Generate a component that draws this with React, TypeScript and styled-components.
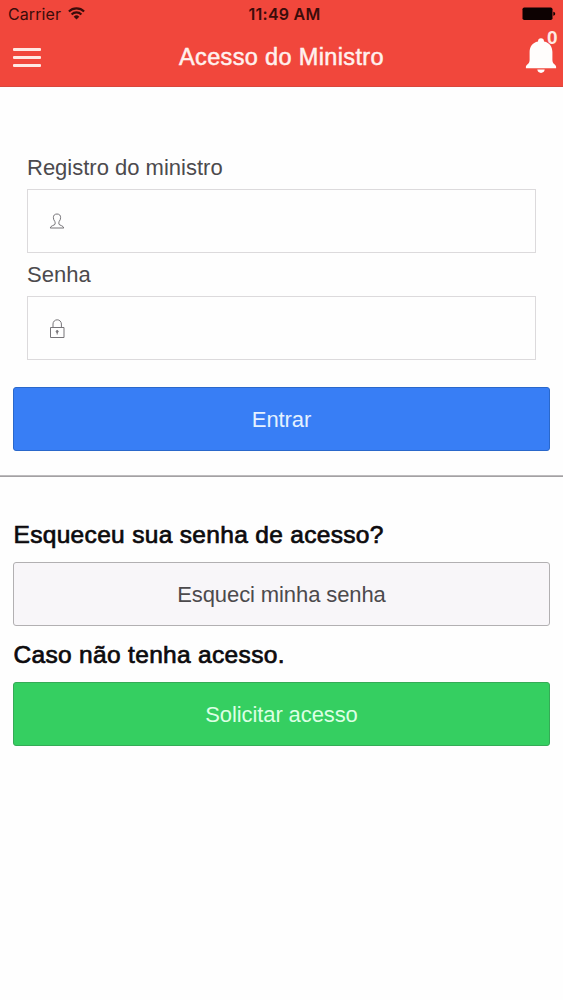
import React from "react";
import styled, { createGlobalStyle } from "styled-components";

const GlobalStyle = createGlobalStyle`
  *, *::before, *::after { box-sizing: border-box; }
  body { margin: 0; background: #fefefe; font-family: "Liberation Sans", Arial, sans-serif; }
`;

const Screen = styled.div`
  width: 100%;
  min-height: 1000px;
  background: #fefefe;
`;

const Header = styled.header`
  height: 87px;
  background: #f1473c;
  border-bottom: 1px solid #d8473d;
`;

const StatusBar = styled.div`
  display: grid;
  grid-template-columns: 1fr auto 1fr;
  align-items: center;
  height: 28px;
  padding: 0 7px 0 8px;
  font-family: Inter, sans-serif;
  font-size: 16px;
  line-height: 29px;
  color: #3a0c0a;
`;

const Carrier = styled.div`
  display: flex;
  align-items: center;
  gap: 7px;
  letter-spacing: 0.1px;

  svg {
    position: relative;
    top: -1px;
  }
`;

const Clock = styled.div`
  font-weight: 600;
  font-size: 16px;
  letter-spacing: 0.25px;
  padding-left: 5px;
`;

const BatterySlot = styled.div`
  display: flex;
  justify-content: flex-end;

  svg {
    margin-bottom: 1px;
  }
`;

const NavBar = styled.div`
  display: grid;
  grid-template-columns: 60px 1fr 60px;
  height: 58px;
`;

const MenuButton = styled.button`
  display: flex;
  flex-direction: column;
  gap: 5.3px;
  padding: 19.5px 0 0 13px;
  border: 0;
  background: none;
`;

const MenuLine = styled.span`
  width: 28px;
  height: 3px;
  border-radius: 1px;
  background: #ffe9e4;
`;

const Title = styled.h1`
  margin: 0;
  text-align: center;
  font-size: 23.5px;
  font-weight: 400;
  line-height: 59px;
  letter-spacing: 0.35px;
  color: #fff1ee;
  -webkit-text-stroke: 0.5px #fff1ee;
`;

const BellButton = styled.div`
  position: relative;
  display: flex;
  padding: 10px 0 0 22px;
`;

const Count = styled.span`
  position: absolute;
  left: 44px;
  top: 0;
  font-size: 19px;
  font-weight: 700;
  line-height: 20px;
  color: #ffe9e4;
`;

const Form = styled.form`
  padding: 65px 27px 0;
`;

const Label = styled.label`
  display: block;
  height: 37px;
  font-size: 22px;
  line-height: 32px;
  letter-spacing: 0;
  color: #4c4a4d;
`;

const Field = styled.div<{ $gap: number }>`
  display: flex;
  align-items: center;
  height: 64px;
  margin-bottom: ${(p) => p.$gap}px;
  padding-left: 20px;
  border: 1px solid #dcdadc;
  background: #fefefe;
`;

const Actions = styled.section`
  padding: 0 13px;
`;

const Button = styled.button<{ $bg: string; $edge: string; $ink: string }>`
  display: block;
  width: 100%;
  height: 64px;
  padding: 2px 0 0;
  border: 1px solid ${(p) => p.$edge};
  border-radius: 3px;
  background: ${(p) => p.$bg};
  color: ${(p) => p.$ink};
  font-family: inherit;
  font-size: 22px;
  line-height: 60px;
  letter-spacing: -0.1px;
`;

const Rule = styled.hr`
  height: 2px;
  margin: 24px 0 41px;
  border: 0;
  border-top: 1px solid #bdbbbd;
  background: #a3a1a3;
`;

const Heading = styled.h2<{ $top: number }>`
  margin: ${(p) => p.$top}px 0 0;
  height: 44px;
  padding-left: 0.5px;
  font-size: 24.5px;
  font-weight: 400;
  line-height: 34px;
  letter-spacing: 0.32px;
  color: #0c0a0d;
  -webkit-text-stroke: 0.7px #0c0a0d;
`;

const WifiIcon = () => (
  <svg width="17" height="13" viewBox="0 0 17 13" fill="none" stroke="#3a0c0a" strokeWidth="2.1">
    <path d="M0.9 4.5a10.8 10.8 0 0 1 15.2 0" />
    <path d="M3.6 7.4a7 7 0 0 1 9.8 0" />
    <path d="M8.5 12.6L5.7 9.7a4 4 0 0 1 5.6 0z" fill="#3a0c0a" stroke="none" />
  </svg>
);

const BatteryIcon = () => (
  <svg width="34" height="14" viewBox="0 0 34 14" fill="#0d0202">
    <rect x="0.5" y="0.5" width="30" height="12.5" rx="1.8" />
    <path d="M31.3 4.7c1.2.3 1.9 1 1.9 2s-.7 1.8-1.9 2z" />
  </svg>
);

const BellIcon = () => (
  <svg width="32" height="36" viewBox="0 0 32 36" fill="#fffdfc">
    <path d="M16 0.3c-1.8 0-3 1.2-3 3.100C7.200 4.700 4.600 8.800 4.600 14v8c0 2-.7 3.200-2 4.300C1.300 27.400.9 28 .9 29v1.300h30.200V29c0-1-.4-1.600-1.700-2.700-1.300-1.100-2-2.300-2-4.300v-8c0-5.200-2.600-9.300-8.400-10.600 0-1.900-1.200-3.100-3-3.100z" />
    <path d="M12.300 31.600h7.400c-.3 2.200-1.700 3.300-3.700 3.300s-3.400-1.100-3.700-3.300z" />
  </svg>
);

const PersonIcon = () => (
  <svg width="18" height="18" viewBox="0 0 18 18" fill="none" stroke="#777579" strokeWidth="1">
    <path d="M9 2C6.500 2 5.300 3.500 5.400 5.700c.1 1.700.5 2.600 1.400 3.700.5.700.5 2.300.2 2.900-.6 1-4.400 1.300-4.800 3.700h13.600c-.4-2.400-4.200-2.700-4.800-3.700-.3-.6-.3-2.200.2-2.900.9-1.100 1.300-2 1.400-3.700C12.700 3.500 11.500 2 9 2z" />
  </svg>
);

const LockIcon = () => (
  <svg width="18" height="22" viewBox="0 0 18 22" fill="none" stroke="#777579" strokeWidth="1">
    <path d="M2.500 10.500h13.500v10H2.500z" />
    <path d="M5 10.500V7a4.200 4.200 0 0 1 8.400 0v3.500" />
    <circle cx="9.200" cy="14.500" r="1" fill="#777579" />
    <path d="M9.200 15v2.500" />
  </svg>
);

export default function App() {
  return (
    <Screen>
      <GlobalStyle />
      <Header>
        <StatusBar>
          <Carrier>
            Carrier
            <WifiIcon />
          </Carrier>
          <Clock>11:49 AM</Clock>
          <BatterySlot>
            <BatteryIcon />
          </BatterySlot>
        </StatusBar>
        <NavBar>
          <MenuButton type="button" aria-label="Menu">
            <MenuLine />
            <MenuLine />
            <MenuLine />
          </MenuButton>
          <Title>Acesso do Ministro</Title>
          <BellButton>
            <BellIcon />
            <Count>0</Count>
          </BellButton>
        </NavBar>
      </Header>
      <Form>
        <Label>Registro do ministro</Label>
        <Field $gap={6}>
          <PersonIcon />
        </Field>
        <Label>Senha</Label>
        <Field $gap={27}>
          <LockIcon />
        </Field>
      </Form>
      <Actions>
        <Button type="button" $bg="#387ef5" $edge="#2a68cb" $ink="#e4f1ff">
          Entrar
        </Button>
      </Actions>
      <Rule />
      <Actions>
        <Heading $top={0}>Esqueceu sua senha de acesso?</Heading>
        <Button type="button" $bg="#f8f6f9" $edge="#b2b0b2" $ink="#4c4a4d">
          Esqueci minha senha
        </Button>
        <Heading $top={12}>Caso não tenha acesso.</Heading>
        <Button type="button" $bg="#35cf61" $edge="#35ab56" $ink="#dcffe4">
          Solicitar acesso
        </Button>
      </Actions>
    </Screen>
  );
}
